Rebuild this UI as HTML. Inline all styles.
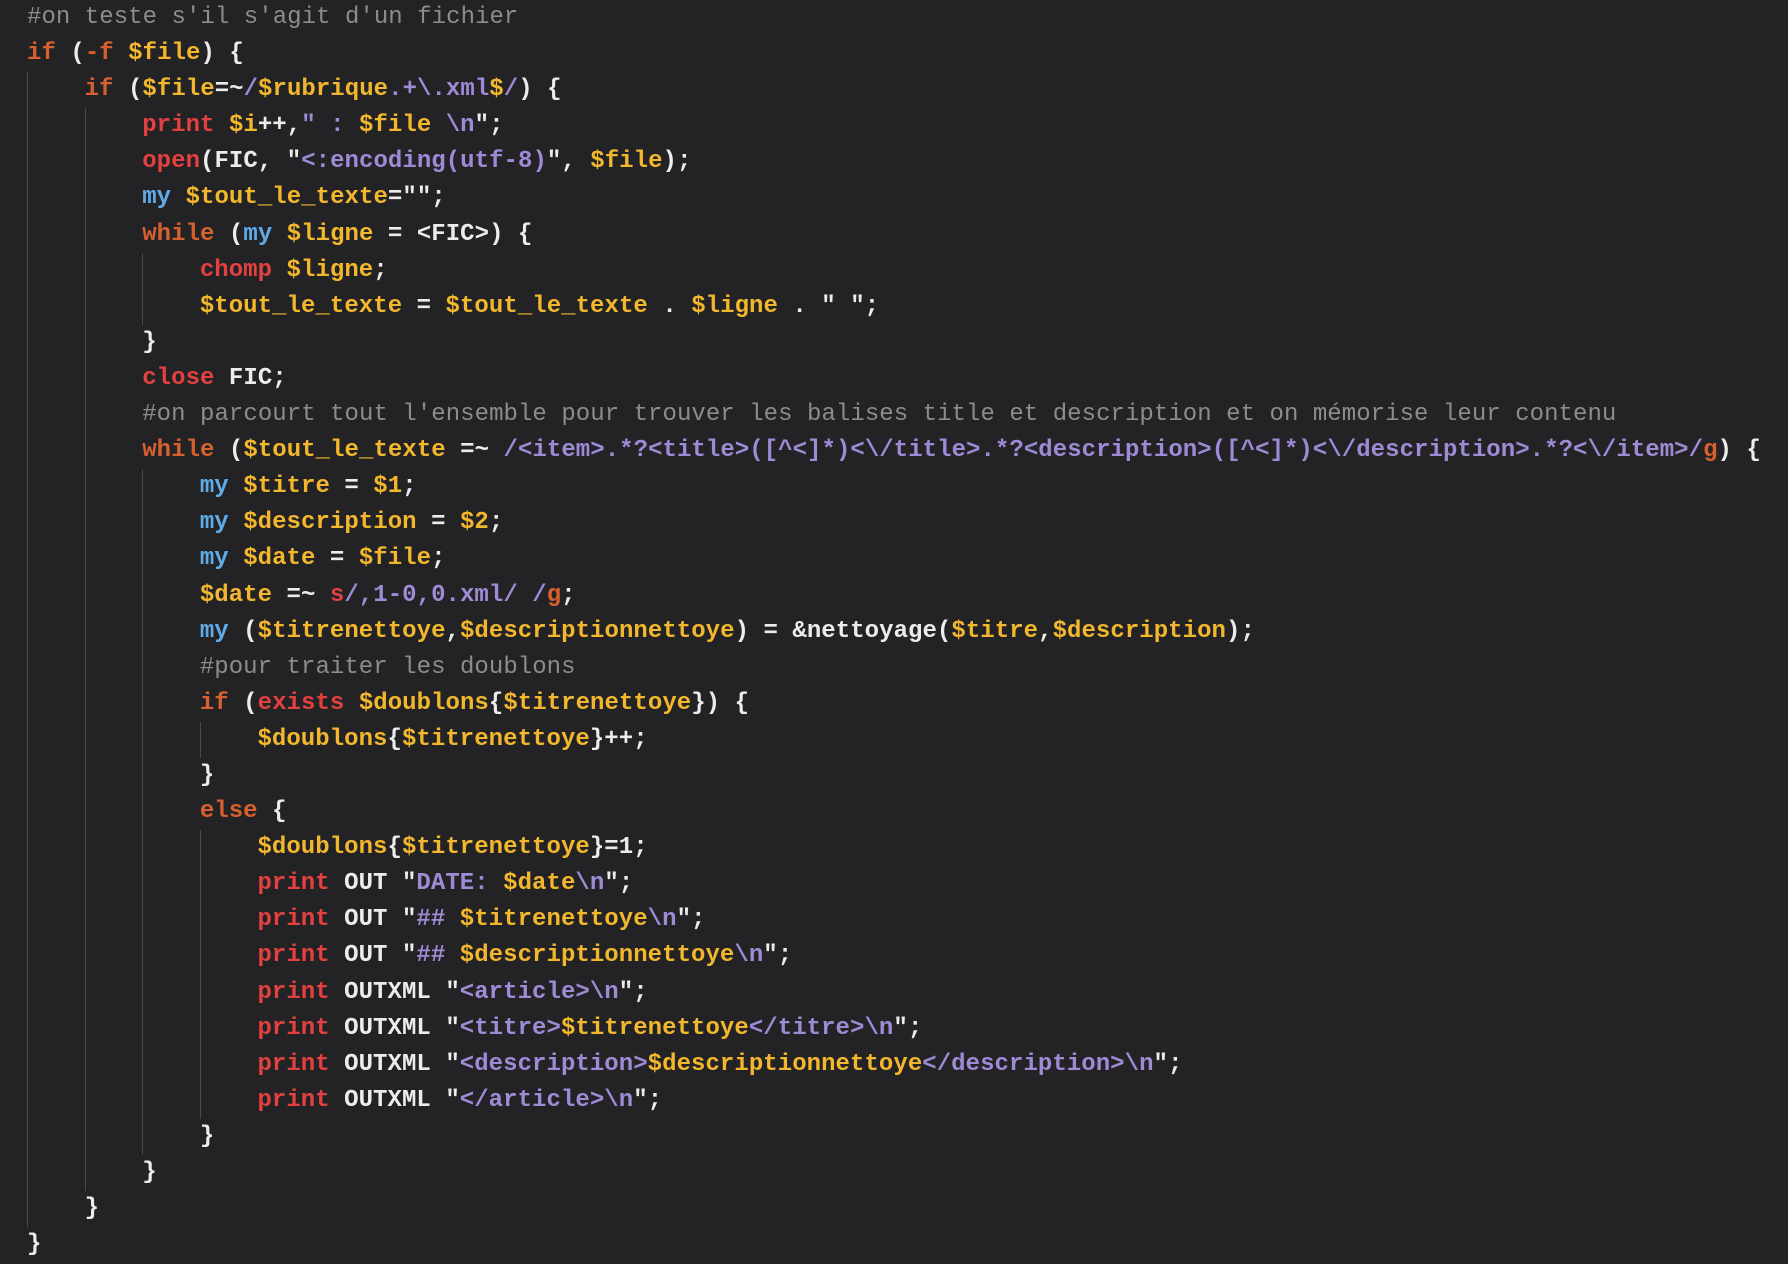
<!DOCTYPE html>
<html><head><meta charset="utf-8"><style>
html,body{margin:0;padding:0;background:#232325;}
body{width:1788px;height:1264px;overflow:hidden;}
pre{margin:0;padding:0 0 0 27px;font-family:"Liberation Mono",monospace;font-size:24px;line-height:36.1px;color:#ececec;font-weight:bold;letter-spacing:0.05px;}
.l{display:block;height:36.1px;white-space:pre;}
.i{display:inline-block;width:4ch;height:36.1px;vertical-align:top;box-shadow:inset 1px 0 0 #4a4a4c;}
.c{color:#8c8c8c;font-weight:normal}
.k{color:#d6602e}
.f{color:#e2413f}
.m{color:#5fabe8}
.v{color:#f2b72c}
.s{color:#9f8ad6}
</style></head><body><pre>
<span class="l"><span class="c">#on teste s'il s'agit d'un fichier</span></span><span class="l"><span class="k">if</span> (<span class="k">-f</span> <span class="v">$file</span>) {</span><span class="l"><span class="i"></span><span class="k">if</span> (<span class="v">$file</span>=~<span class="s">/</span><span class="v">$rubrique</span><span class="s">.+\.xml</span><span class="v">$</span><span class="s">/</span>) {</span><span class="l"><span class="i"></span><span class="i"></span><span class="f">print</span> <span class="v">$i</span>++,<span class="s">" : </span><span class="v">$file</span><span class="s"> \n</span>";</span><span class="l"><span class="i"></span><span class="i"></span><span class="f">open</span>(FIC, "<span class="s">&lt;:encoding(utf-8)</span>", <span class="v">$file</span>);</span><span class="l"><span class="i"></span><span class="i"></span><span class="m">my</span> <span class="v">$tout_le_texte</span>="";</span><span class="l"><span class="i"></span><span class="i"></span><span class="k">while</span> (<span class="m">my</span> <span class="v">$ligne</span> = &lt;FIC&gt;) {</span><span class="l"><span class="i"></span><span class="i"></span><span class="i"></span><span class="f">chomp</span> <span class="v">$ligne</span>;</span><span class="l"><span class="i"></span><span class="i"></span><span class="i"></span><span class="v">$tout_le_texte</span> = <span class="v">$tout_le_texte</span> . <span class="v">$ligne</span> . " ";</span><span class="l"><span class="i"></span><span class="i"></span>}</span><span class="l"><span class="i"></span><span class="i"></span><span class="f">close</span> FIC;</span><span class="l"><span class="i"></span><span class="i"></span><span class="c">#on parcourt tout l'ensemble pour trouver les balises title et description et on mémorise leur contenu</span></span><span class="l"><span class="i"></span><span class="i"></span><span class="k">while</span> (<span class="v">$tout_le_texte</span> =~ <span class="s">/&lt;item&gt;.*?&lt;title&gt;([^&lt;]*)&lt;\/title&gt;.*?&lt;description&gt;([^&lt;]*)&lt;\/description&gt;.*?&lt;\/item&gt;/</span><span class="k">g</span>) {</span><span class="l"><span class="i"></span><span class="i"></span><span class="i"></span><span class="m">my</span> <span class="v">$titre</span> = <span class="v">$1</span>;</span><span class="l"><span class="i"></span><span class="i"></span><span class="i"></span><span class="m">my</span> <span class="v">$description</span> = <span class="v">$2</span>;</span><span class="l"><span class="i"></span><span class="i"></span><span class="i"></span><span class="m">my</span> <span class="v">$date</span> = <span class="v">$file</span>;</span><span class="l"><span class="i"></span><span class="i"></span><span class="i"></span><span class="v">$date</span> =~ <span class="f">s</span><span class="s">/,1-0,0.xml/ /</span><span class="k">g</span>;</span><span class="l"><span class="i"></span><span class="i"></span><span class="i"></span><span class="m">my</span> (<span class="v">$titrenettoye</span>,<span class="v">$descriptionnettoye</span>) = &amp;nettoyage(<span class="v">$titre</span>,<span class="v">$description</span>);</span><span class="l"><span class="i"></span><span class="i"></span><span class="i"></span><span class="c">#pour traiter les doublons</span></span><span class="l"><span class="i"></span><span class="i"></span><span class="i"></span><span class="k">if</span> (<span class="f">exists</span> <span class="v">$doublons</span>{<span class="v">$titrenettoye</span>}) {</span><span class="l"><span class="i"></span><span class="i"></span><span class="i"></span><span class="i"></span><span class="v">$doublons</span>{<span class="v">$titrenettoye</span>}++;</span><span class="l"><span class="i"></span><span class="i"></span><span class="i"></span>}</span><span class="l"><span class="i"></span><span class="i"></span><span class="i"></span><span class="k">else</span> {</span><span class="l"><span class="i"></span><span class="i"></span><span class="i"></span><span class="i"></span><span class="v">$doublons</span>{<span class="v">$titrenettoye</span>}=1;</span><span class="l"><span class="i"></span><span class="i"></span><span class="i"></span><span class="i"></span><span class="f">print</span> OUT "<span class="s">DATE: </span><span class="v">$date</span><span class="s">\n</span>";</span><span class="l"><span class="i"></span><span class="i"></span><span class="i"></span><span class="i"></span><span class="f">print</span> OUT "<span class="s">## </span><span class="v">$titrenettoye</span><span class="s">\n</span>";</span><span class="l"><span class="i"></span><span class="i"></span><span class="i"></span><span class="i"></span><span class="f">print</span> OUT "<span class="s">## </span><span class="v">$descriptionnettoye</span><span class="s">\n</span>";</span><span class="l"><span class="i"></span><span class="i"></span><span class="i"></span><span class="i"></span><span class="f">print</span> OUTXML "<span class="s">&lt;article&gt;\n</span>";</span><span class="l"><span class="i"></span><span class="i"></span><span class="i"></span><span class="i"></span><span class="f">print</span> OUTXML "<span class="s">&lt;titre&gt;</span><span class="v">$titrenettoye</span><span class="s">&lt;/titre&gt;\n</span>";</span><span class="l"><span class="i"></span><span class="i"></span><span class="i"></span><span class="i"></span><span class="f">print</span> OUTXML "<span class="s">&lt;description&gt;</span><span class="v">$descriptionnettoye</span><span class="s">&lt;/description&gt;\n</span>";</span><span class="l"><span class="i"></span><span class="i"></span><span class="i"></span><span class="i"></span><span class="f">print</span> OUTXML "<span class="s">&lt;/article&gt;\n</span>";</span><span class="l"><span class="i"></span><span class="i"></span><span class="i"></span>}</span><span class="l"><span class="i"></span><span class="i"></span>}</span><span class="l"><span class="i"></span>}</span><span class="l">}</span></pre></body></html>
